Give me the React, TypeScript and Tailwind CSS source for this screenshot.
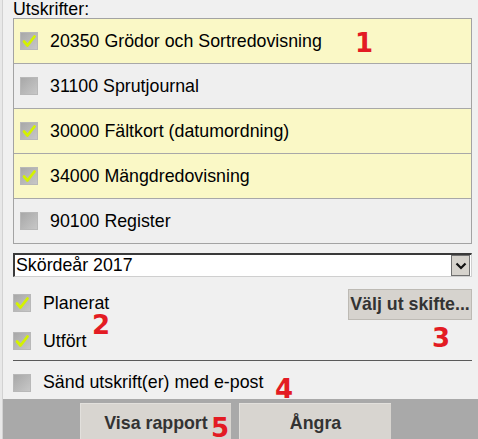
import React from "react";

function Box({ checked }: { checked: boolean }) {
  return (
    <svg width="18" height="18" viewBox="0 0 18 18" className="shrink-0 block">
      <defs>
        <linearGradient id="cbg" x1="0" y1="0" x2="1" y2="1">
          <stop offset="0" stopColor="#a6a6a6" />
          <stop offset="1" stopColor="#c9c9c9" />
        </linearGradient>
      </defs>
      <rect x="0" y="0" width="18" height="18" fill="url(#cbg)" />
      <rect x="0.5" y="0.5" width="17" height="17" fill="none" stroke="#b8b8b8" />
      {checked && (
        <polyline
          points="4,9.5 7.5,13.5 14.5,4.5"
          fill="none"
          stroke="#d4f200"
          strokeWidth="2.8"
          strokeLinecap="round"
          strokeLinejoin="round"
        />
      )}
    </svg>
  );
}

const rows = [
  { t: "20350 Grödor och Sortredovisning", c: true },
  { t: "31100 Sprutjournal", c: false },
  { t: "30000 Fältkort (datumordning)", c: true },
  { t: "34000 Mängdredovisning", c: true },
  { t: "90100 Register", c: false },
];

function Num({ n, cls }: { n: string; cls: string }) {
  return (
    <div
      className={
        "absolute text-[26px] leading-none font-bold text-[#e31b23] " + cls
      }
      style={{ fontFamily: '"DejaVu Sans", sans-serif' }}
    >
      {n}
    </div>
  );
}

export default function App() {
  return (
    <div
      className="relative w-[478px] h-[439px] overflow-hidden bg-[#f0f0f0] flex text-[17.8px] text-black"
      style={{ fontFamily: '"Liberation Sans", Arial, sans-serif' }}
    >
      <div className="w-[3px] bg-[#e8e8e8] border-r border-[#d2d2d2] shrink-0" />
      <div className="flex-1 flex flex-col">
        <div className="pl-[10px] pr-[6px] flex flex-col">
          <div className="h-[18px] leading-[18px]">Utskrifter:</div>
          <div className="border border-[#a3a3a3] flex flex-col">
            {rows.map((r, i) => (
              <div
                key={i}
                className={
                  "h-[44px] flex items-center pl-[6px] gap-[12px] " +
                  (i > 0 ? "border-t border-[#a8a8a8] h-[45px] " : "") +
                  (r.c ? "bg-[#faf8c6]" : "bg-[#efefef]")
                }
              >
                <Box checked={r.c} />
                <span>{r.t}</span>
              </div>
            ))}
          </div>
          <div className="mt-[9px] h-[24px] bg-white border-t-2 border-l-2 border-[#3a3a3a] border-r border-b border-r-[#cfcfcf] border-b-[#cfcfcf] flex items-center justify-between">
            <span className="pl-[1px]">Skördeår 2017</span>
            <div className="w-[19px] h-[21px] mr-[1px] bg-[#d6d3cd] border border-[#707070] flex items-center justify-center">
              <svg width="12" height="8" viewBox="0 0 12 8">
                <polyline
                  points="1.5,1.5 6,6 10.5,1.5"
                  fill="none"
                  stroke="#111"
                  strokeWidth="2.2"
                />
              </svg>
            </div>
          </div>
          <div className="mt-[12px] flex justify-between">
            <div className="pt-[5px] flex flex-col gap-[20px]">
              <div className="h-[18px] flex items-center gap-[12px]">
                <Box checked={true} />
                <span>Planerat</span>
              </div>
              <div className="h-[18px] flex items-center gap-[12px]">
                <Box checked={true} />
                <span>Utfört</span>
              </div>
            </div>
            <div className="w-[124px] h-[31px] bg-[#d6d3ce] border border-[#bdbab4] flex items-center justify-center font-bold text-[#333]">
              Välj ut skifte...
            </div>
          </div>
          <div className="mt-[10px] h-[1px] bg-[#5a5a5a]" />
          <div className="mt-[12px] h-[19px] flex items-center gap-[12px]">
            <Box checked={false} />
            <span>Sänd utskrift(er) med e-post</span>
          </div>
        </div>
        <div className="mt-[7px] flex-1 bg-[#a9a9a9] pt-[4px] pl-[77px] flex gap-[8px]">
          <div className="w-[151px] h-[40px] bg-[#d8d5d0] border-t border-l border-[#e2e0dc] flex items-center justify-center font-bold text-[#333]">
            Visa rapport
          </div>
          <div className="w-[152px] h-[40px] bg-[#d8d5d0] border-t border-l border-[#e2e0dc] flex items-center justify-center font-bold text-[#333]">
            Ångra
          </div>
        </div>
      </div>
      <Num n="1" cls="left-[355px] top-[30px]" />
      <Num n="2" cls="left-[92px] top-[312px]" />
      <Num n="3" cls="left-[432px] top-[325px]" />
      <Num n="4" cls="left-[275px] top-[376px]" />
      <Num n="5" cls="left-[211px] top-[415px]" />
    </div>
  );
}
